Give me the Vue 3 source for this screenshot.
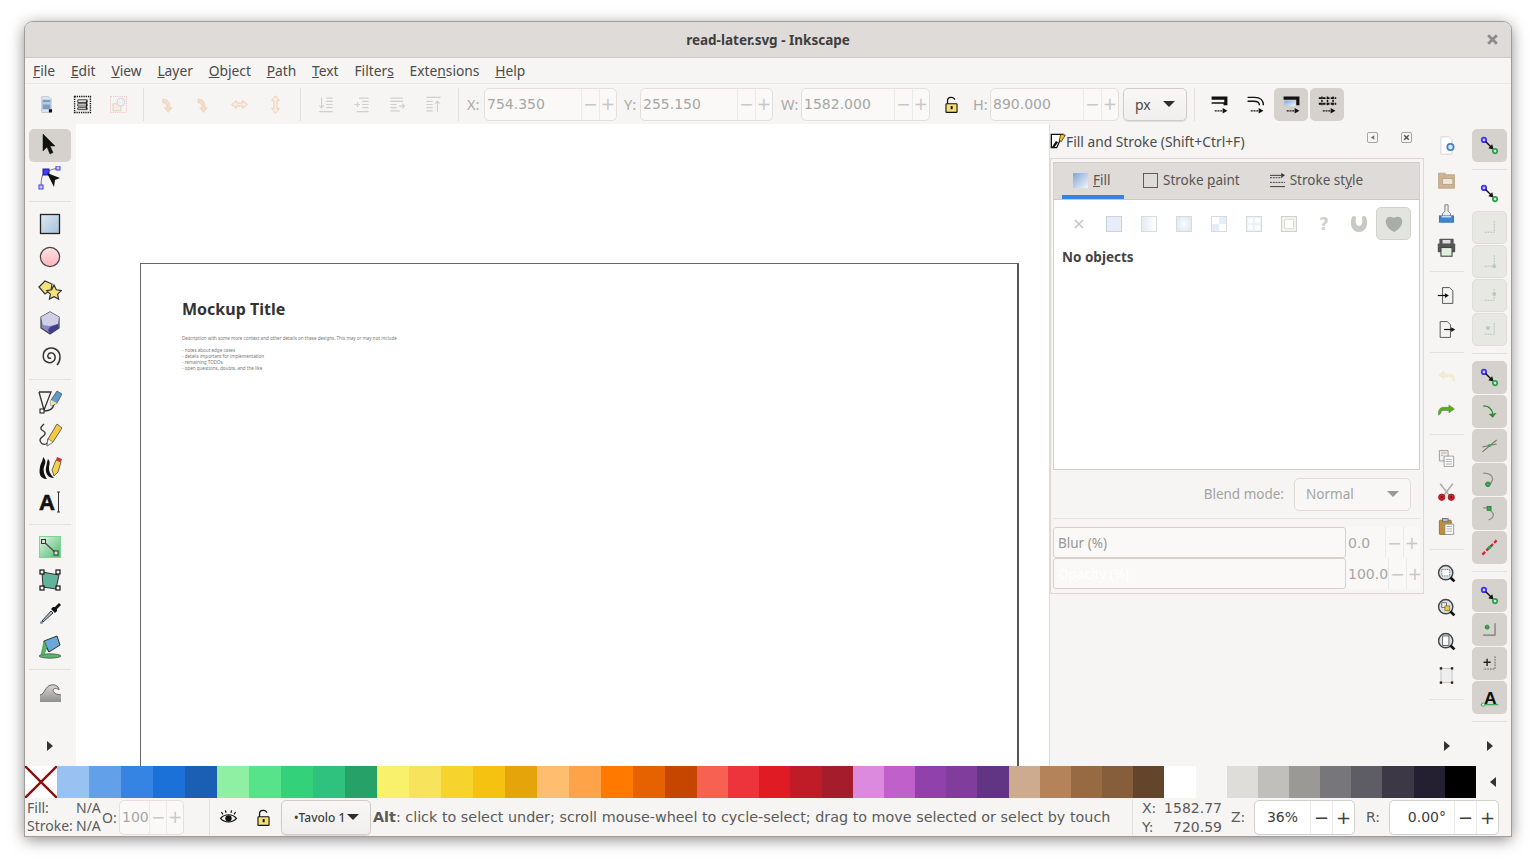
<template>
  <div class="window">
    <svg class="defs" width="0" height="0">
      <defs>
        <linearGradient id="gBlue" x1="0" y1="0" x2="1" y2="1"><stop offset="0" stop-color="#dfe9f3" /><stop offset="1" stop-color="#a5c0d8" /></linearGradient>
        <linearGradient id="gPink" x1="0" y1="0" x2="0" y2="1"><stop offset="0" stop-color="#ffe3e6" /><stop offset="1" stop-color="#ffb3bb" /></linearGradient>
        <linearGradient id="gGreen" x1="0" y1="0" x2="1" y2="1"><stop offset="0" stop-color="#e3f6e6" /><stop offset="1" stop-color="#4eb96e" /></linearGradient>
        <linearGradient id="gFill" x1="0" y1="0" x2="1" y2="1"><stop offset="0" stop-color="#7fa6d8" /><stop offset="1" stop-color="#f2f5fa" /></linearGradient>
        <linearGradient id="gGrey" x1="0" y1="0" x2="0" y2="1"><stop offset="0" stop-color="#d5d5d2" /><stop offset="1" stop-color="#8f8f8c" /></linearGradient>
      </defs>
    </svg>

    <header class="titlebar">
      <span class="title">read-later.svg - Inkscape</span>
      <svg class="close" viewBox="0 0 12 12"><path d="M2 2l8 8M10 2l-8 8" /></svg>
    </header>

    <nav class="menubar">
      <span v-for="m in menus" :key="m.pre + m.key + m.post" class="menu">{{ m.pre }}<u>{{ m.key }}</u>{{ m.post }}</span>
    </nav>

    <div class="toolbar">
      <template v-for="(item, i) in topBar" :key="i">
        <span v-if="item === '|'" class="vsep"></span>
        <span v-else class="tbtn"><svg class="ico20" viewBox="0 0 24 24" v-html="icons[item]"></svg></span>
      </template>
      <div v-for="f in topFields" :key="f.label" class="fld" :class="f.cls">
        <span class="lbl">{{ f.label }}</span>
        <div class="spin dis">
          <span class="val">{{ f.value }}</span>
          <span class="sb">−</span>
          <span class="sb">+</span>
        </div>
        <span v-if="f.lock" class="lockbox"><svg class="ico20" viewBox="0 0 24 24" v-html="icons.lock"></svg></span>
      </div>
      <div class="combo unit"><span>px</span><i class="caret"></i></div>
      <span class="vsep unit-sep"></span>
      <span class="tbtn"><svg class="ico20" viewBox="0 0 24 24" v-html="icons.scale1"></svg></span>
      <span class="tbtn"><svg class="ico20" viewBox="0 0 24 24" v-html="icons.scale2"></svg></span>
      <span class="tbtn on"><svg class="ico20" viewBox="0 0 24 24" v-html="icons.scale3"></svg></span>
      <span class="tbtn on"><svg class="ico20" viewBox="0 0 24 24" v-html="icons.scale4"></svg></span>
    </div>

    <div class="main">
      <aside class="tools">
        <template v-for="(item, i) in tools" :key="i">
          <span v-if="item === '|'" class="hsep"></span>
          <span v-else class="tool" :class="{ on: item === 'select' }"><svg class="ico24" viewBox="0 0 24 24" v-html="icons[item]"></svg></span>
        </template>
        <i class="more"></i>
      </aside>

      <section class="canvas">
        <div class="page">
          <h2 class="doc-title">Mockup Title</h2>
          <p class="doc-text">Description with some more context and other details on these designs. This may or may not include</p>
          <p class="doc-text list">- notes about edge cases<br />- details important for implementation<br />- remaining TODOs<br />- open questions, doubts, and the like</p>
        </div>
      </section>

      <section class="dock">
        <div class="dock-head">
          <svg class="ico16" viewBox="0 0 24 24" v-html="icons.fillstroke"></svg>
          <span class="dock-title">Fill and Stroke (Shift+Ctrl+F)</span>
          <svg class="dock-btn first" viewBox="0 0 12 12"><rect x=".5" y=".5" width="11" height="11" rx="1.5" /><path class="solid" d="M8 3.5v5L4 6z" /></svg>
          <svg class="dock-btn" viewBox="0 0 12 12"><rect x=".5" y=".5" width="11" height="11" rx="1.5" /><path class="cross" d="M3.5 3.5l5 5M8.5 3.5l-5 5" /></svg>
        </div>
        <div class="frame">
          <div class="notebook">
            <div class="tabs">
              <div class="tab active"><svg class="tab-ico" viewBox="0 0 16 16"><rect width="16" height="16" fill="url(#gFill)" /></svg><span><u>F</u>ill</span></div>
              <div class="tab"><svg class="tab-ico" viewBox="0 0 16 16"><rect x=".5" y=".5" width="15" height="15" fill="none" stroke="#555" /></svg><span>Stroke <u>p</u>aint</span></div>
              <div class="tab"><svg class="tab-ico" viewBox="0 0 16 16"><path d="M0 5h13M0 10h16" stroke="#333" fill="none" stroke-dasharray="2 1" /><path d="M0 14.500h16M0 2.500h12" stroke="#333" fill="none" /><path d="M12 0l4 2.500-4 2.500z" fill="#333" /></svg><span>Stroke st<u>y</u>le</span></div>
            </div>
            <div class="nb-body">
              <div class="paints">
                <span v-for="p in paints" :key="p" class="paint" :class="{ on: p === 'p10' }"><svg class="ico24" viewBox="0 0 24 24" v-html="icons[p]"></svg></span>
              </div>
              <div class="no-obj">No objects</div>
            </div>
          </div>
          <div class="blend">
            <span>Blend mode:</span>
            <div class="combo dis blend-combo"><span>Normal</span><i class="caret"></i></div>
          </div>
          <div class="frame-sep"></div>
          <div v-for="s in sliders" :key="s.label" class="slider">
            <div class="trough" :class="s.cls">{{ s.label }}</div>
            <span class="sval">{{ s.value }}</span>
            <span class="sb">−</span>
            <span class="sb">+</span>
          </div>
        </div>
      </section>

      <aside class="cmds">
        <template v-for="(item, i) in cmds" :key="i">
          <span v-if="item === '|'" class="hsep"></span>
          <span v-else class="cmd"><svg class="ico20" viewBox="0 0 24 24" v-html="icons[item]"></svg></span>
        </template>
        <i class="more"></i>
      </aside>

      <aside class="snaps">
        <template v-for="(item, i) in snaps" :key="i">
          <span v-if="item === '|'" class="hsep"></span>
          <span v-else class="snap" :class="{ on: item.on, off: item.off }"><svg class="ico20" viewBox="0 0 24 24" v-html="icons[item.i]"></svg></span>
        </template>
        <i class="more"></i>
      </aside>
    </div>

    <div class="palette">
      <svg class="none" viewBox="0 0 32 32" preserveAspectRatio="none"><path d="M0 0l32 32M32 0L0 32" /></svg>
      <span v-for="(c, i) in colors" :key="c + i" class="swatch" :class="{ wide: i < 20 }" :style="{ background: c }"></span>
      <span class="pal-more"><i class="caret-left"></i></span>
    </div>

    <footer class="status">
      <div class="fs">
        <span>Fill:</span><span>N/A</span>
        <span>Stroke:</span><span>N/A</span>
      </div>
      <span class="o-lbl">O:</span>
      <div class="spin dis o-spin">
        <span class="val">100</span>
        <span class="sb">−</span>
        <span class="sb">+</span>
      </div>
      <span class="st-sep"></span>
      <span class="st-btn"><svg class="ico20" viewBox="0 0 24 24" v-html="icons.eye"></svg></span>
      <span class="st-btn"><svg class="ico20" viewBox="0 0 24 24" v-html="icons.lock"></svg></span>
      <div class="combo layer"><span>•Tavolo 1</span><i class="caret"></i></div>
      <div class="msg"><b>Alt</b>: click to select under; scroll mouse-wheel to cycle-select; drag to move selected or select by touch</div>
      <div class="coords">
        <span>X:</span><span class="num">1582.77</span>
        <span>Y:</span><span class="num">720.59</span>
      </div>
      <span class="z-lbl">Z:</span>
      <div class="spin z-spin">
        <span class="val">36%</span>
        <span class="sb">−</span>
        <span class="sb">+</span>
      </div>
      <span class="r-lbl">R:</span>
      <div class="spin r-spin">
        <span class="val">0.00°</span>
        <span class="sb">−</span>
        <span class="sb">+</span>
      </div>
    </footer>
  </div>
</template>

<script setup>
const menus = [
  { pre: '', key: 'F', post: 'ile' },
  { pre: '', key: 'E', post: 'dit' },
  { pre: '', key: 'V', post: 'iew' },
  { pre: '', key: 'L', post: 'ayer' },
  { pre: '', key: 'O', post: 'bject' },
  { pre: '', key: 'P', post: 'ath' },
  { pre: '', key: 'T', post: 'ext' },
  { pre: 'Filter', key: 's', post: '' },
  { pre: 'Exte', key: 'n', post: 'sions' },
  { pre: '', key: 'H', post: 'elp' }
]

const topBar = ['selAll', 'selAllLayers', 'deselect', '|', 'rotL', 'rotR', 'flipH', 'flipV', '|', 'lower', 'lower1', 'raise1', 'raise', '|']

const topFields = [
  { label: 'X:', value: '754.350', cls: 'f-x' },
  { label: 'Y:', value: '255.150', cls: 'f-y' },
  { label: 'W:', value: '1582.000', cls: 'f-w', lock: true },
  { label: 'H:', value: '890.000', cls: 'f-h' }
]

const tools = ['select', 'node', '|', 'rect', 'ellipse', 'star', 'box3d', 'spiral', '|', 'pen', 'pencil', 'calli', 'text', '|', 'gradient', 'mesh', 'dropper', 'bucket', '|', 'tweak']

const cmds = ['docNew', 'open', 'stamp', 'print', '|', 'import', 'export', '|', 'undo', 'redo', '|', 'copy', 'cut', 'paste', '|', 'zoomSel', 'zoomDraw', 'zoomPage', 'fit', '|']

const snaps = [
  { i: 'snapNode', on: true }, '|',
  { i: 'snapNode' },
  { i: 'snapB1', off: true }, { i: 'snapB2', off: true }, { i: 'snapB3', off: true }, { i: 'snapB4', off: true }, '|',
  { i: 'snapNode', on: true }, { i: 'snapPath', on: true }, { i: 'snapCross', on: true }, { i: 'snapCusp', on: true }, { i: 'snapSmooth', on: true }, { i: 'snapLine', on: true }, '|',
  { i: 'snapNode', on: true }, { i: 'snapCenter', on: true }, { i: 'snapPlus', on: true }, { i: 'snapText', on: true }, '|'
]

const paints = ['p1', 'p2', 'p3', 'p4', 'p5', 'p6', 'p7', 'p8', 'p9', 'p10']

const sliders = [
  { label: 'Blur (%)', value: '0.0', cls: 'blur' },
  { label: 'Opacity (%)', value: '100.0', cls: 'opacity' }
]

const colors = [
  '#99c1f1', '#62a0ea', '#3584e4', '#1c71d8', '#1a5fb4',
  '#8ff0a4', '#57e389', '#33d17a', '#2ec27e', '#26a269',
  '#f9f06b', '#f8e45c', '#f6d32d', '#f5c211', '#e5a50a',
  '#ffbe6f', '#ffa348', '#ff7800', '#e66100', '#c64600',
  '#f66151', '#ed333b', '#e01b24', '#c01c28', '#a51d2d',
  '#dc8add', '#c061cb', '#9141ac', '#813d9c', '#613583',
  '#cdab8f', '#b5835a', '#986a44', '#865e3c', '#63452c',
  '#ffffff', '#f6f5f4', '#deddda', '#c0bfbc', '#9a9996', '#77767b', '#5e5c64', '#3d3846', '#241f31', '#000000'
]

const nodeIcon = '<circle cx="5" cy="5" r="2.800" fill="#c9c6ff" stroke="#3d33e6" stroke-width="2.200"/><path d="M7 7l7 7" stroke="#111" stroke-width="1.800"/><path d="M10.500 15.500l5-5 1.500 6.500z" fill="#111"/><circle cx="19" cy="19" r="2.800" fill="#c8efd0" stroke="#2f9e4f" stroke-width="2.200"/>'
const offL = '<path d="M18 4v14H5" fill="none" stroke="#a9c4ab" stroke-width="1.200" stroke-dasharray="2 1.400"/>'
const arrowRow = '<path d="M6 20h11" stroke="#111" stroke-width="1.600" stroke-dasharray="2.500 1"/><path d="M16 16.500l6 3.500-6 3.500z" fill="#111"/>'

const icons = {
  selAll: '<path d="M6 2h9l3 3v17H6z" fill="#dfe6ef" stroke="#b8c2cf"/><rect x="7" y="6" width="10" height="12" fill="#7f9dc4"/><rect x="7" y="9" width="10" height="3" fill="#b9cce3"/><rect x="15" y="18" width="4" height="4" fill="#111"/>',
  selAllLayers: '<rect x="2" y="2" width="20" height="20" fill="none" stroke="#111" stroke-width="1.800" stroke-dasharray="1.600 1.200"/><path d="M6 6h12v3.500H6zM6 11h12v3H6zM6 16h12v2.500H6z" fill="#ddd" stroke="#222" stroke-width="1"/><path d="M17 7v11" stroke="#222" stroke-width="1.400"/>',
  deselect: '<rect x="2" y="2" width="20" height="20" fill="none" stroke="#f0b5b5" stroke-dasharray="1.600 1.200"/><path d="M5 11h10v9H5z" fill="#f3ecdf" stroke="#d8ccb6"/><circle cx="15" cy="9" r="5" fill="#eef0f2" stroke="#c9cdd2"/>',
  rotL: '<path d="M19 5c-6 0-9 4-9 9v2H7l5 6 5-6h-3v-2c0-2 1-4 5-4z" transform="matrix(-1 0 0 1 25 0)" fill="#f5dcc6" stroke="#ecc8a8" stroke-width=".6"/>',
  rotR: '<path d="M5 5c6 0 9 4 9 9v2h3l-5 6-5-6h3v-2c0-2-1-4-5-4z" fill="#f5dcc6" stroke="#ecc8a8" stroke-width=".6"/>',
  flipH: '<path d="M2 12l6-5v3h8V7l6 5-6 5v-3H8v3z" fill="#f8ebdf" stroke="#ecc8a8" stroke-width="1"/>',
  flipV: '<path d="M12 1l5 6h-3v10h3l-5 6-5-6h3V7H7z" fill="#f8ebdf" stroke="#ecc8a8" stroke-width="1"/>',
  lower: '<g fill="none" stroke="#cfcfcc" stroke-width="1.400"><path d="M13 4h8M13 8h8M13 12h8M13 16h8M4 21h17"/><path d="M7 3v13M4 13l3 3 3-3"/></g>',
  lower1: '<g fill="none" stroke="#cfcfcc" stroke-width="1.400"><path d="M9 4h12M13 8h8M13 12h8M13 16h8M6 21h15"/><path d="M3 12h7M7 9v6"/></g>',
  raise1: '<g fill="none" stroke="#cfcfcc" stroke-width="1.400"><path d="M3 4h16M3 8h16M3 12h8M3 16h8M3 20h12"/><path d="M14 14h7M18 11l3 3-3 3"/></g>',
  raise: '<g fill="none" stroke="#cfcfcc" stroke-width="1.400"><path d="M3 3h18M3 8h8M3 12h8M3 16h8M3 20h8"/><path d="M17 21V8M14 11l3-3 3 3"/></g>',
  lock: '<path d="M7 12V7c0-5 9-5 9-1" fill="none" stroke="#111" stroke-width="1.600"/><rect x="5" y="11" width="14" height="11" rx="1" fill="#f6dd7a" stroke="#111" stroke-width="1.400"/><rect x="11" y="14" width="2.400" height="4" fill="#111"/>',
  scale1: '<path d="M2 2h20v11h-4V6H2z" fill="#111"/><path d="M2 10h16v3" fill="none" stroke="#111" stroke-width="1.800"/>' + arrowRow,
  scale2: '<path d="M2 3h9c7 0 11 4 11 10M2 8h8c4 0 7 2 7 5" fill="none" stroke="#111" stroke-width="1.800"/>' + arrowRow,
  scale3: '<path d="M2 2h20v11h-4V6H2z" fill="#111"/><rect x="3" y="7" width="14" height="7" fill="url(#gFill)"/>' + arrowRow,
  scale4: '<path d="M1 4h22M1 11h22" stroke="#111" stroke-width="2.400" stroke-dasharray="3.500 1.500"/><path d="M5 2v11M12 2v11M19 2v11" stroke="#111" stroke-width="1.800" stroke-dasharray="3 1"/>' + arrowRow,
  select: '<path d="M5 1v17l4-4 3 7 3-1.500-3-6.500h5z" fill="#111" stroke="#111" stroke-width=".5"/>',
  node: '<path d="M3 20Q3 7 8 6Q14 3 20 2" fill="none" stroke="#777"/><rect x="5" y="3" width="6" height="6" fill="#3e3ef0" stroke="#1a1ab0"/><rect x="18" y="0" width="4" height="4" fill="#c8c8ff" stroke="#3e3ef0"/><rect x="1" y="19" width="4" height="4" fill="#c8c8ff" stroke="#3e3ef0"/><path d="M9 7l13 5-5 2-1 7z" fill="#111"/>',
  rect: '<rect x="2.500" y="2.500" width="19" height="19" fill="url(#gBlue)" stroke="#222" stroke-width="1.300"/>',
  ellipse: '<circle cx="12" cy="12" r="9.600" fill="url(#gPink)" stroke="#444" stroke-width="1.200"/>',
  star: '<path d="M1 9l6-6 7 3-1 6-6 4z" fill="#f6e27a" stroke="#333" stroke-width="1.200"/><path d="M16 7l2.300 4.800 5 .8-3.700 3.500 1 5-4.600-2.400-4.600 2.400 1-5-3.700-3.500 5-.8z" fill="#f6e27a" stroke="#333" stroke-width="1.200"/>',
  box3d: '<path d="M12 1l9 5v11l-9 6-9-6V6z" fill="#8a8ac0" stroke="#444" stroke-width="1.200"/><path d="M12 1l9 5-1 7-8 2-7-1-2-8z" fill="#cfcfe8"/><path d="M12 16l8-3 1 4-9 6-2-4z" fill="#3f3f90"/>',
  spiral: '<path d="M13 13c-2 1-4-1-3-3 1-3 6-3 7 1 1 5-4 8-8 6-5-2-5-10 0-13 6-3 13 1 13 8 0 3-1 6-3 8" fill="none" stroke="#333" stroke-width="1.500"/>',
  pen: '<path d="M1 2h12L6 20" fill="none" stroke="#333" stroke-width="1.300"/><path d="M1 2l5 18" fill="none" stroke="#333" stroke-width="1.300"/><rect x="2" y="19" width="4" height="4" fill="#fff" stroke="#111"/><path d="M6 21c5 0 9-2 10-7" fill="none" stroke="#333" stroke-width="1.300"/><path d="M13 10l6-9 5 3-5 9-6 3z" fill="#5b9ac9" stroke="#444" stroke-width=".7"/><path d="M13 10l6 3-6 3z" fill="#f3e1a8"/>',
  pencil: '<path d="M6 1c-2 2-4 3-3 5s5 2 4 5-5 3-5 6 3 5 6 4 1-6 4-6" fill="none" stroke="#333" stroke-width="1.300"/><path d="M19 1l5 4-9 14-6 4 1-7z" fill="#f6c945" stroke="#444" stroke-width=".8"/><path d="M9 23l1-7 5 3z" fill="#fff" stroke="#444" stroke-width=".5"/>',
  calli: '<path d="M5 1c4 4 2 7 1 10s0 8 3 12C1 23 1 16 2 11S5 5 5 1zM10 3c3 3 1 6 1 9s1 6 5 10c-6 0-9-5-8-10s1-6 2-9z" fill="#111"/><path d="M14 14l4-10 5 2-3 10-4 4z" fill="#f4d14a" stroke="#333" stroke-width=".7"/><path d="M18 4l1-3 5 2-1 3z" fill="#c9333c"/>',
  text: '<text x="1" y="20" font-family="Liberation Sans, sans-serif" font-weight="700" font-size="22" fill="#111" stroke="#111" stroke-width=".6">A</text><path d="M19 2h3M20.500 2v20M19 22h3" stroke="#333" fill="none"/>',
  gradient: '<rect x="1.500" y="1.500" width="21" height="21" fill="url(#gGreen)" stroke="#7fd493"/><path d="M6 7l12 11" stroke="#444" stroke-width="1.200"/><rect x="3.500" y="4.500" width="4" height="4" fill="#ddd" stroke="#333"/><rect x="16" y="16" width="4" height="4" fill="#ddd" stroke="#333"/>',
  mesh: '<path d="M4 4l17 3-3 14L5 19z" fill="#62b29c" stroke="#333"/><g fill="#fff" stroke="#111" stroke-width="1.200"><rect x="2" y="2" width="4" height="4"/><rect x="18" y="2" width="4" height="4"/><rect x="2" y="18" width="4" height="4"/><rect x="18" y="18" width="4" height="4"/></g>',
  dropper: '<path d="M4 20l9-10 2 2-10 9z" fill="#a8c4dc" stroke="#333"/><path d="M13 8l2-2 2 0 4-4 2 2-4 4 0 2-2 2z" fill="#111"/><circle cx="3.500" cy="21.500" r="1.500" fill="#6796b5"/>',
  bucket: '<ellipse cx="12" cy="21" rx="11" ry="2.200" fill="#59b36a" stroke="#333" stroke-width=".6"/><path d="M6 6l13-5 3 9-11 7z" fill="#6ba7d8" stroke="#333"/><path d="M6 6c1 4 3 8 5 11" fill="none" stroke="#333"/><path d="M6 6L3 20h3l3-8z" fill="#59b36a" stroke="#2f7f40" stroke-width=".5"/>',
  tweak: '<path d="M2 22v-7c5-1 5-9 11-10 5-1 8 2 8 5-2-2-5-2-6 0 0 2 2 3 3 4l5 1v7z" fill="url(#gGrey)"/><path d="M2 15c5-1 5-9 11-10 5-1 8 2 8 5-2-2-5-2-6 0 0 2 2 3 3 4l5 1" fill="none" stroke="#666" stroke-width="1"/>',
  docNew: '<path d="M5 1h10l4 4v18H5z" fill="#fff" stroke="#ccc"/><circle cx="17" cy="14" r="4" fill="#dbe9f6" stroke="#3f7fc4" stroke-width="2.200"/>',
  open: '<path d="M2 4h8l2 2h10v17H2z" fill="#cdb391" stroke="#b8a180"/><rect x="7" y="11" width="13" height="7" fill="#ece6da" stroke="#a3937a" stroke-width=".7"/>',
  stamp: '<path d="M10 1h4v8l3 3v4H7v-4l3-3z" fill="#eee" stroke="#666"/><rect x="3" y="15" width="18" height="8" fill="#3f86cf" stroke="#2b69a8"/><rect x="6" y="15" width="12" height="2" fill="#cfe2f5"/>',
  print: '<rect x="3" y="1" width="18" height="9" rx="1" fill="#555"/><rect x="7" y="2.500" width="10" height="5" fill="#ddd"/><rect x="1" y="7" width="22" height="11" rx="1" fill="#555"/><rect x="5" y="12" width="14" height="11" fill="#dff0dc" stroke="#444" stroke-width="1.400"/>',
  import: '<path d="M7 2h9l4 4v16H7z" fill="#f3f3f1" stroke="#333"/><path d="M1 12h11" stroke="#111" stroke-width="1.500"/><path d="M10 9l5 3-5 3z" fill="#111"/>',
  export: '<path d="M4 2h9l4 4v16H4z" fill="#f3f3f1" stroke="#333"/><path d="M9 12h11" stroke="#111" stroke-width="1.500"/><path d="M18 9l5 3-5 3z" fill="#111"/>',
  undo: '<path d="M9 5L2 10l7 5v-3h7c2 0 3 1 3 3l3 3c1-5-1-9-6-9H9z" fill="#f3ecd2" stroke="#ece3c0" stroke-width=".6"/>',
  redo: '<path d="M15 5l7 5-7 5v-3H8c-2 0-3 1-3 3l-3 3C1 13 3 8 8 8h7z" fill="#5fa82a" stroke="#3e8a16" stroke-width=".6"/>',
  copy: '<path d="M3 2h11v13H3z" fill="#f0f0ee" stroke="#888"/><path d="M9 9h12v13H9z" fill="#fff" stroke="#888"/><path d="M5 5h7M5 8h3M11 13h8M11 16h8M11 19h8" stroke="#999"/>',
  cut: '<path d="M4 1l11 14M20 1L9 15" stroke="#aaa" stroke-width="2"/><circle cx="6" cy="18" r="4" fill="#d3202a" stroke="#9b1019"/><circle cx="18" cy="18" r="4" fill="#d3202a" stroke="#9b1019"/><circle cx="6" cy="18" r="1.200" fill="#300"/><circle cx="18" cy="18" r="1.200" fill="#300"/>',
  paste: '<rect x="3" y="4" width="15" height="18" rx="1" fill="#c08c3e" stroke="#8c6525"/><rect x="7" y="2" width="7" height="4" fill="#bbb" stroke="#666"/><path d="M10 9h11v13H10z" fill="#fff" stroke="#888"/><path d="M12 12h7M12 15h7M12 18h7" stroke="#999"/>',
  zoomSel: '<circle cx="11" cy="11" r="9" fill="#d9e2e8" stroke="#444" stroke-width="1.800"/><rect x="6" y="7" width="10" height="8" fill="#fff" stroke="#444" stroke-dasharray="1.200 1"/><path d="M17 17l5 5" stroke="#111" stroke-width="3.400"/>',
  zoomDraw: '<circle cx="11" cy="11" r="9" fill="#d9e2e8" stroke="#444" stroke-width="1.800"/><rect x="6" y="6" width="6" height="6" fill="#eee" stroke="#555"/><rect x="10" y="10" width="6" height="6" fill="#e8c84a" stroke="#8a7420"/><path d="M17 17l5 5" stroke="#111" stroke-width="3.400"/>',
  zoomPage: '<circle cx="11" cy="11" r="9" fill="#d9e2e8" stroke="#444" stroke-width="1.800"/><path d="M7 5h8v12H7z" fill="#fff" stroke="#444"/><path d="M17 17l5 5" stroke="#111" stroke-width="3.400"/>',
  fit: '<rect x="5" y="3" width="14" height="18" fill="#eee" stroke="#bbb"/><g fill="#222"><rect x="3.500" y="1.500" width="3" height="3"/><rect x="17.500" y="1.500" width="3" height="3"/><rect x="3.500" y="19.500" width="3" height="3"/><rect x="17.500" y="19.500" width="3" height="3"/></g>',
  snapNode: nodeIcon,
  snapB1: offL,
  snapB2: offL + '<circle cx="18" cy="18" r="2.500" fill="#b6cdb8"/>',
  snapB3: offL + '<circle cx="18" cy="10" r="2.500" fill="#b6cdb8"/>',
  snapB4: offL + '<circle cx="10" cy="10" r="2.500" fill="#b6cdb8"/>',
  snapPath: '<path d="M4 5c8 0 12 5 12 11" fill="none" stroke="#2f8a3f" stroke-width="1.600"/><path d="M11 15l5 5 5-6z" fill="#2f8a3f"/>',
  snapCross: '<path d="M3 20L21 5M3 14l18-4" stroke="#777" stroke-width="1.400"/><circle cx="12" cy="12" r="2" fill="#3aa655"/>',
  snapCusp: '<path d="M4 4c8 0 12 3 12 8-1 4-4 6-6 8" fill="none" stroke="#888" stroke-width="1.500"/><circle cx="10" cy="18" r="3" fill="#3aa655" stroke="#1f7a38"/>',
  snapSmooth: '<path d="M4 5h7c1 4 5 4 6 8 0 3-3 6-6 7" fill="none" stroke="#888" stroke-width="1.500"/><rect x="9" y="3" width="5" height="5" fill="#3aa655" stroke="#1f7a38"/>',
  snapLine: '<path d="M3 21l18-18" stroke="#cf2a33" stroke-width="3" stroke-dasharray="5 2"/><circle cx="12" cy="12" r="2.200" fill="#3aa655"/>',
  snapCenter: '<path d="M19 4v15H4" fill="none" stroke="#777" stroke-width="1.500"/><circle cx="9" cy="9" r="2.500" fill="#3aa655" stroke="#1f7a38"/>',
  snapPlus: '<path d="M19 3v16H4" fill="none" stroke="#555" stroke-width="1.200" stroke-dasharray="2 1.400"/><path d="M9 6v9M4.500 10.500h9" stroke="#222" stroke-width="1.800"/>',
  snapText: '<text x="5" y="20" font-family="Liberation Sans, sans-serif" font-weight="700" font-size="22" fill="#111">A</text><path d="M1 21h22" stroke="#3aa655" stroke-width="1.500"/><circle cx="4" cy="21" r="2.200" fill="#c8efd0" stroke="#2f9e4f"/>',
  fillstroke: '<path d="M2 2h17L10 22H2z" fill="#fff" stroke="#111" stroke-width="2"/><path d="M3 21l6-9 3 2-5 7z" fill="#111"/><path d="M16 2l7 1-6 10-3-2z" fill="#f4c430" stroke="#111"/>',
  eye: '<path d="M2 13c5-6 15-6 20 0-5 6-15 6-20 0z" fill="#eee" stroke="#111" stroke-width="1.500"/><circle cx="12" cy="13" r="4" fill="#111"/><path d="M5 8L3 5M9 6L8 3M15 6l1-3M19 8l2-3" stroke="#111" stroke-width="1.500"/>',
  p1: '<path d="M8 8l8 8M16 8l-8 8" stroke="#c4c4c2" stroke-width="1.600"/>',
  p2: '<rect x="4.500" y="4.500" width="15" height="15" fill="#e7edf5" stroke="#c9d3df"/>',
  p3: '<rect x="4.500" y="4.500" width="15" height="15" fill="url(#p3g)" stroke="#d5dbe2"/><defs><linearGradient id="p3g"><stop offset="0" stop-color="#e3eaf3"/><stop offset="1" stop-color="#fff"/></linearGradient></defs>',
  p4: '<rect x="4.500" y="4.500" width="15" height="15" fill="url(#p4g)" stroke="#d5dbe2"/><defs><radialGradient id="p4g"><stop offset="0" stop-color="#fff"/><stop offset="1" stop-color="#e3eaf3"/></radialGradient></defs>',
  p5: '<rect x="4.500" y="4.500" width="15" height="15" fill="#fff" stroke="#d5dbe2"/><path d="M12 5h7v7h-7zM5 12h7v7H5z" fill="#e7edf5"/>',
  p6: '<rect x="4.500" y="4.500" width="15" height="15" fill="#eef2f8" stroke="#d5dbe2"/><g fill="#fff"><circle cx="8.500" cy="8.500" r="2.500"/><circle cx="15.500" cy="8.500" r="2.500"/><circle cx="8.500" cy="15.500" r="2.500"/><circle cx="15.500" cy="15.500" r="2.500"/></g>',
  p7: '<rect x="4.500" y="4.500" width="15" height="15" fill="#f2f2f0" stroke="#cfcfcc"/><rect x="7.500" y="7.500" width="9" height="9" fill="#fff" stroke="#dedede"/>',
  p8: '<text x="7" y="18" font-family="DejaVu Sans, sans-serif" font-weight="700" font-size="17" fill="#d0d0ce">?</text>',
  p9: '<path d="M5 5c2-2 4-1 4 1-1 4 0 8 3 8s4-4 3-8c0-2 2-3 4-1 3 7 0 15-7 15S2 12 5 5z" fill="#c7c9c5"/>',
  p10: '<path d="M12 20C6 17 3 12 4 8c1-4 5-4 8-2 3-2 7-2 8 2 1 4-2 9-8 12z" fill="#aaaca8"/>'
}
</script>

<style>
html,
body {
  background: #fff;
  min-height: 864px;
}
</style>

<style scoped>
.window {
  position: relative;
  box-sizing: border-box;
  width: 1486px;
  height: 814px;
  margin: 22px 0 0 25px;
  display: flex;
  flex-direction: column;
  background: #f6f5f4;
  border-radius: 8px 8px 0 0;
  box-shadow: 0 0 0 1px #a09d99, 0 3px 16px rgba(0, 0, 0, 0.5);
  font-family: "Noto Sans", "Open Sans", sans-serif;
  font-size: 14px;
  color: #555;
  overflow: hidden;
}

.defs {
  position: absolute;
}

.titlebar {
  height: 35px;
  flex: none;
  display: flex;
  align-items: center;
  justify-content: center;
  position: relative;
  background: #dedbd8;
  border-bottom: 1px solid #cdc9c5;
}

.title {
  font-weight: 700;
  font-size: 13.5px;
  color: #3e3e3e;
}

.close {
  position: absolute;
  right: 12px;
  top: 11px;
  width: 13px;
  height: 13px;
  fill: none;
  stroke: #8e8c8a;
  stroke-width: 2.6;
}

.menubar {
  height: 26px;
  flex: none;
  display: flex;
  align-items: center;
  padding-left: 8px;
  gap: 15.8px;
  font-size: 13.8px;
  color: #4a4a4a;
  border-bottom: 1px solid #ebe9e7;
  box-sizing: border-box;
}

.toolbar {
  height: 40px;
  flex: none;
  display: flex;
  align-items: center;
  padding-left: 3px;
}

.tbtn {
  width: 36px;
  height: 33px;
  display: flex;
  align-items: center;
  justify-content: center;
  box-sizing: border-box;
}

.tbtn.on {
  width: 34px;
  margin: 0 1px;
  background: #d5d1cd;
  border-radius: 5px;
}

.ico16 {
  width: 16px;
  height: 16px;
  flex: none;
}

.ico20 {
  width: 19px;
  height: 19px;
  flex: none;
}

.ico24 {
  width: 24px;
  height: 24px;
  flex: none;
}

.vsep {
  width: 1px;
  height: 33px;
  margin: 0 6px 0 6.5px;
  background: #e2e0dd;
  flex: none;
}

.fld {
  display: flex;
  align-items: center;
}

.lbl {
  color: #a9a9a7;
  font-size: 14.5px;
  flex: none;
}

.f-x {
  margin-left: 2.5px;
}

.f-x .lbl {
  width: 17px;
}

.f-y {
  margin-left: 7px;
}

.f-y .lbl {
  width: 16px;
}

.f-w {
  margin-left: 8px;
}

.f-w .lbl {
  width: 20px;
}

.f-h .lbl {
  width: 17px;
}

.spin {
  display: flex;
  align-items: stretch;
  box-sizing: border-box;
  height: 33px;
  background: #fff;
  border: 1px solid #d3cfcb;
  border-radius: 5px;
  font-family: "DejaVu Sans", sans-serif;
  font-size: 14px;
  color: #3d3d3d;
  flex: none;
}

.spin.dis {
  background: #faf9f8;
  border-color: #e2dfdc;
  color: #a6a6a4;
}

.spin .val {
  flex: 1;
  display: flex;
  align-items: center;
  padding-left: 2px;
}

.f-x .spin,
.f-y .spin {
  width: 133px;
}

.f-w .spin,
.f-h .spin {
  width: 129px;
}

.sb {
  width: 16.5px;
  flex: none;
  display: flex;
  align-items: center;
  justify-content: center;
  border-left: 1px solid #eceae8;
  font-size: 17px;
  color: #c9c8c6;
  font-family: "DejaVu Sans", sans-serif;
}

.lockbox {
  width: 43px;
  display: flex;
  justify-content: center;
}

.combo {
  box-sizing: border-box;
  display: flex;
  align-items: center;
  justify-content: space-between;
  height: 33px;
  border: 1px solid #d0ccc8;
  border-radius: 5px;
  background: linear-gradient(#f8f7f6, #f0efed);
  box-shadow: 0 1px 1px rgba(0, 0, 0, 0.1);
  color: #4a4a4a;
}

.caret {
  width: 0;
  height: 0;
  border-left: 6px solid transparent;
  border-right: 6px solid transparent;
  border-top: 6px solid #2e2e2e;
}

.unit {
  width: 64px;
  margin-left: 4px;
  padding: 0 11px 0 11px;
  font-size: 14px;
}

.unit-sep {
  margin-left: 7px;
}

.main {
  flex: 1;
  min-height: 0;
  display: flex;
}

.tools {
  width: 51px;
  flex: none;
  display: flex;
  flex-direction: column;
  align-items: center;
  padding: 4.5px 1px 0 0;
  box-sizing: border-box;
  position: relative;
}

.tool {
  width: 42px;
  height: 33.25px;
  display: flex;
  align-items: center;
  justify-content: center;
  border-radius: 5px;
  flex: none;
}

.tool.on {
  background: #d5d1cd;
}

.hsep {
  width: 42px;
  height: 1px;
  background: #e2e0dd;
  margin: 5.5px 0;
  flex: none;
}

.more {
  margin-top: auto;
  margin-bottom: 15px;
  width: 0;
  height: 0;
  border-top: 5px solid transparent;
  border-bottom: 5px solid transparent;
  border-left: 6px solid #333;
}

.canvas {
  width: 973px;
  flex: none;
  position: relative;
  overflow: hidden;
  background: #fff;
}

.page {
  position: absolute;
  left: 64px;
  top: 139px;
  width: 879px;
  height: 800px;
  box-sizing: border-box;
  border: 1px solid #666;
  border-right: 2.5px solid #555;
  border-radius: 1px;
  padding: 35px 0 0 41px;
  background: #fff;
}

.doc-title {
  margin: 0;
  font-size: 16px;
  line-height: 20px;
  font-weight: 700;
  color: #333;
  font-family: "Noto Sans", sans-serif;
}

.doc-text {
  margin: 16px 0 0;
  font-size: 4.55px;
  line-height: 6px;
  color: #777;
  font-family: "Noto Sans", sans-serif;
}

.doc-text.list {
  margin-top: 6px;
}

.dock {
  width: 379px;
  flex: none;
  box-sizing: border-box;
  border-left: 1px solid #dedbd8;
  padding-right: 4px;
}

.dock-head {
  height: 34px;
  display: flex;
  align-items: center;
  font-size: 13.8px;
  color: #4a4a4a;
}

.dock-title {
  flex: 1;
}

.dock-btn {
  width: 11px;
  height: 11px;
  fill: none;
  stroke: #9a9896;
  margin-right: 12px;
  margin-bottom: 8px;
}

.dock-btn.first {
  margin-right: 23px;
}

.dock-btn .solid {
  fill: #777;
  stroke: none;
}

.dock-btn .cross {
  stroke: #555;
  stroke-width: 1.6;
}

.frame {
  border: 1px solid #dcd9d5;
  box-sizing: border-box;
  height: 436px;
  padding: 3px 3px 0 2px;
}

.notebook {
  box-sizing: border-box;
  height: 308px;
  border: 1px solid #d3cfcb;
  display: flex;
  flex-direction: column;
}

.tabs {
  height: 36px;
  flex: none;
  display: flex;
  background: #dedbd8;
  border-bottom: 1px solid #cdc9c5;
  padding-left: 8px;
  color: #555;
}

.tab {
  display: flex;
  align-items: center;
  gap: 5px;
  padding: 0 11px 2px;
  box-sizing: border-box;
  font-size: 13.5px;
}

.tab.active {
  width: 62px;
  color: #555;
  border-bottom: 4px solid #3584e4;
  padding: 2px 0 0 11px;
}

.tab:nth-child(2) {
  margin-left: 8px;
}

.tab:nth-child(3) {
  margin-left: 8px;
}

.tab-ico {
  width: 15px;
  height: 15px;
  flex: none;
}

.nb-body {
  flex: 1;
  background: #fff;
}

.paints {
  display: flex;
  padding: 7px 0 0 7px;
}

.paint {
  width: 35px;
  height: 33px;
  box-sizing: border-box;
  display: flex;
  align-items: center;
  justify-content: center;
  border-radius: 5px;
}

.paint.on {
  background: #e3e3df;
  border: 1px solid #d3d1cd;
}

.no-obj {
  font-weight: 700;
  color: #444;
  font-size: 13.5px;
  margin: 7.5px 0 0 8px;
}

.blend {
  height: 48px;
  display: flex;
  align-items: center;
  justify-content: flex-end;
  gap: 10px;
  padding-right: 9px;
  color: #a3a3a1;
  font-size: 13.5px;
}

.blend-combo {
  width: 117px;
  padding: 0 11px;
  background: #f8f7f6;
  border-color: #dedbd8;
  box-shadow: none;
  color: #a3a3a1;
}

.blend-combo .caret {
  border-top-color: #999;
}

.frame-sep {
  height: 1px;
  background: #e5e3e0;
  margin: 0 0 8px 0;
}

.slider {
  display: flex;
  height: 31px;
  align-items: stretch;
  background: #f9f8f7;
}

.trough {
  box-sizing: border-box;
  width: 293px;
  flex: none;
  display: flex;
  align-items: center;
  padding-left: 4px;
  border: 1px solid #d5d1cd;
  border-radius: 3px;
  background: #faf9f8;
  color: #979795;
  font-size: 13.5px;
}

.trough.opacity {
  color: #fff;
}

.sval {
  flex: 1;
  display: flex;
  align-items: center;
  padding-left: 2px;
  font-family: "DejaVu Sans", sans-serif;
  font-size: 14px;
  color: #a6a6a4;
}

.cmds,
.snaps {
  flex: none;
  display: flex;
  flex-direction: column;
  align-items: center;
  box-sizing: border-box;
}

.cmds {
  width: 37px;
  padding-top: 4.5px;
}

.snaps {
  width: 46px;
  padding: 4px 4px 0 7px;
}

.cmds .hsep {
  width: 34px;
  margin: 6.25px 0;
}

.snaps .hsep {
  width: 35px;
  margin: 6.5px 0;
}

.cmd,
.snap {
  height: 34px;
  width: 35px;
  flex: none;
  display: flex;
  align-items: center;
  justify-content: center;
  box-sizing: border-box;
}

.snap.on,
.snap.off {
  height: 33px;
  margin: 0.5px 0;
  border-radius: 5px;
}

.snap.on {
  background: #d5d1cd;
}

.snap.off {
  background: #e7e7e3;
  border: 1px solid #e0ddd9;
}

.palette {
  height: 32px;
  flex: none;
  display: flex;
}

.none {
  width: 32px;
  height: 32px;
  flex: none;
  background: #fff;
  stroke: #8b0f0f;
  stroke-width: 2.4;
  fill: none;
}

.swatch {
  flex: 1;
  min-width: 0;
}

.swatch.wide {
  flex: none;
  width: 32px;
}

.pal-more {
  width: 35px;
  flex: none;
  display: flex;
  align-items: center;
  justify-content: center;
}

.caret-left {
  width: 0;
  height: 0;
  border-top: 5px solid transparent;
  border-bottom: 5px solid transparent;
  border-right: 6px solid #333;
}

.status {
  height: 38px;
  flex: none;
  display: flex;
  align-items: center;
  font-size: 14px;
  color: #5a5a5a;
  padding-left: 2px;
}

.fs {
  width: 75px;
  flex: none;
  display: grid;
  grid-template-columns: 49px auto;
  line-height: 18.5px;
  white-space: nowrap;
}

.o-lbl {
  width: 17px;
  flex: none;
}

.o-spin {
  width: 65px;
  height: 35px;
}

.o-spin .sb {
  width: 16px;
}

.st-sep {
  width: 1px;
  height: 36px;
  margin: 0 1px 0 25px;
  background: #e2e0dd;
  flex: none;
}

.st-btn {
  width: 35px;
  display: flex;
  justify-content: center;
  flex: none;
}

.layer {
  width: 90px;
  height: 35px;
  flex: none;
  padding: 0 11px 0 12px;
  font-size: 12px;
  font-weight: 500;
  color: #3e3e3e;
  white-space: nowrap;
}

.msg {
  width: 761px;
  flex: none;
  font-family: "DejaVu Sans", sans-serif;
  font-size: 14.35px;
  white-space: nowrap;
  padding-left: 2px;
  box-sizing: border-box;
}

.coords {
  box-sizing: border-box;
  width: 99px;
  height: 36px;
  flex: none;
  padding: 0 9px 0 9px;
  border-left: 1px solid #e2e0dd;
  display: grid;
  grid-template-columns: auto 1fr;
  line-height: 18.5px;
  font-family: "DejaVu Sans", sans-serif;
  font-size: 14px;
}

.num {
  text-align: right;
}

.z-lbl,
.r-lbl {
  font-family: "DejaVu Sans", sans-serif;
  flex: none;
}

.z-lbl {
  width: 23px;
}

.r-lbl {
  width: 23px;
  margin-left: 11px;
}

.z-spin {
  width: 101px;
  height: 35px;
}

.r-spin {
  width: 110px;
  height: 35px;
}

.z-spin .val {
  justify-content: flex-end;
  padding-right: 12px;
}

.r-spin .val {
  justify-content: flex-end;
  padding-right: 8px;
}

.z-spin .sb,
.r-spin .sb {
  width: 21px;
  color: #3d3d3d;
  font-size: 18px;
}
</style>
